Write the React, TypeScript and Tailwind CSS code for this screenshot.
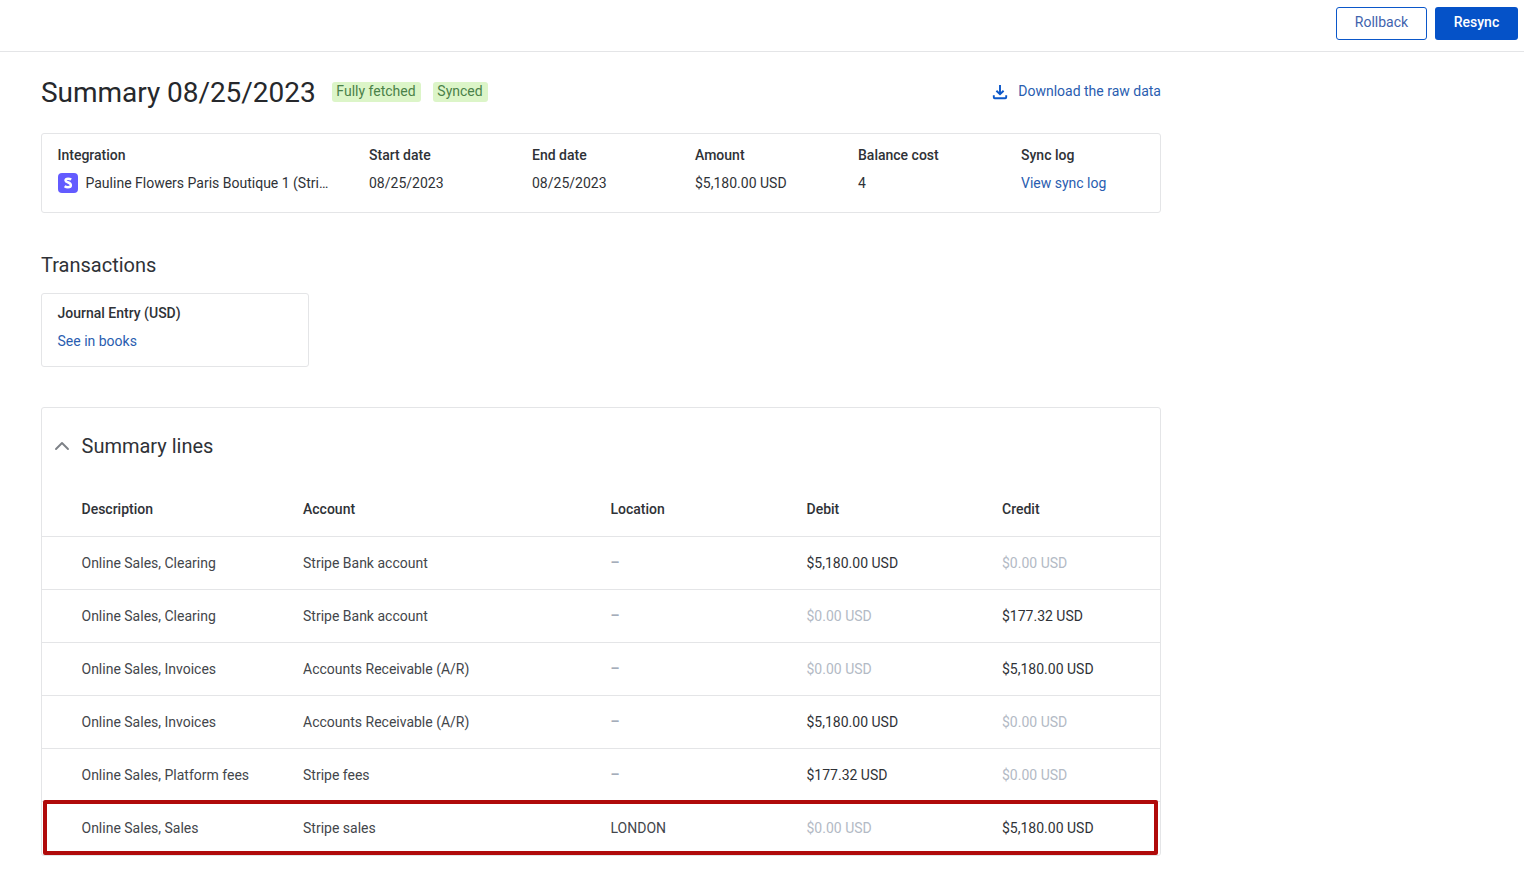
import { ChevronUp } from 'lucide-react';

const lines = [
  { description: 'Online Sales, Clearing', account: 'Stripe Bank account', location: '–', debit: '$5,180.00 USD', credit: '$0.00 USD' },
  { description: 'Online Sales, Clearing', account: 'Stripe Bank account', location: '–', debit: '$0.00 USD', credit: '$177.32 USD' },
  { description: 'Online Sales, Invoices', account: 'Accounts Receivable (A/R)', location: '–', debit: '$0.00 USD', credit: '$5,180.00 USD' },
  { description: 'Online Sales, Invoices', account: 'Accounts Receivable (A/R)', location: '–', debit: '$5,180.00 USD', credit: '$0.00 USD' },
  { description: 'Online Sales, Platform fees', account: 'Stripe fees', location: '–', debit: '$177.32 USD', credit: '$0.00 USD' },
  { description: 'Online Sales, Sales', account: 'Stripe sales', location: 'LONDON', debit: '$0.00 USD', credit: '$5,180.00 USD' },
];

const tableCols = 'grid grid-cols-[221.5px_307.5px_196px_195.5px_1fr] pl-[39.5px] items-center';

function Amount({ value }: { value: string }) {
  const isZero = value.startsWith('$0.00');
  return <div className={isZero ? 'text-[#b3bac5]' : 'text-[#2f3237]'}>{value}</div>;
}

function DownloadIcon() {
  return (
    <svg width="16" height="16" viewBox="0 0 16 16" fill="none" className="text-[#0b57c9]">
      <path d="M8 1v9M4.4 6.7 8 10.2l3.6-3.5" stroke="currentColor" strokeWidth="1.9" />
      <path d="M1.8 11.2v2.1c0 .5.4.9.9.9h10.6c.5 0 .9-.4.9-.9v-2.1" stroke="currentColor" strokeWidth="1.9" />
    </svg>
  );
}

function StripeLogo() {
  return (
    <div className="w-5 h-5 rounded-[4px] bg-[#635bff] flex items-center justify-center shrink-0">
      <svg width="10" height="12" viewBox="0 0 10 12" fill="none">
        <path d="M8.2 2.6C7.3 2 6.2 1.7 5.1 1.7c-1.5 0-2.6.6-2.6 1.7 0 2.3 5.4 1.4 5.4 4.9 0 1.3-1.2 2-3 2-1.2 0-2.4-.4-3.3-1" stroke="white" strokeWidth="2.4" />
      </svg>
    </div>
  );
}

export default function App() {
  return (
    <div className="min-h-[869px] bg-white font-['Roboto',sans-serif] text-[14px] leading-5 text-[#2f3237]">
      <header className="h-[52px] border-b border-[#e4e5e7] flex justify-end items-start gap-2 pt-[7px] pr-[6px]">
        <button className="w-[91px] h-[33px] pb-[4px] rounded-[3px] border border-[#0b57c9] text-[#3f63ad] bg-white">Rollback</button>
        <button className="w-[83px] h-[33px] pb-[4px] rounded-[3px] bg-[#0552c8] text-white font-medium">Resync</button>
      </header>

      <main className="w-[1120px] ml-[41px]">
        <div className="flex items-center justify-between h-[81px] pb-[1px]">
          <div className="flex items-center">
            <h1 className="w-[274.5px] whitespace-nowrap pt-[2px] text-[28px] leading-9 tracking-[-0.04px] text-[#26282c]">Summary 08/25/2023</h1>
            <span className="ml-[16px] w-[89px] h-5 pb-[2px] text-center rounded-[3px] bg-[#dcf5c8] text-[#4a8148] leading-[18px]">Fully fetched</span>
            <span className="ml-3 w-[55px] h-5 pb-[2px] text-center rounded-[3px] bg-[#dcf5c8] text-[#4a8148] leading-[18px]">Synced</span>
          </div>
          <a className="flex items-center gap-[10px] text-[#2a5db0]">
            <DownloadIcon />
            <span className="pb-[2px]">Download the raw data</span>
          </a>
        </div>

        <section className="h-[80px] border border-[#e4e5e7] rounded-[3px] pl-[15.5px] pt-[11px] grid grid-cols-[311.5px_163px_163px_163px_163px_1fr]">
          <div>
            <div className="font-medium h-5">Integration</div>
            <div className="flex items-center gap-2 mt-2 h-5">
              <StripeLogo />
              <span className="whitespace-nowrap">Pauline Flowers Paris Boutique 1 (Stri…</span>
            </div>
          </div>
          <div>
            <div className="font-medium h-5">Start date</div>
            <div className="mt-2">08/25/2023</div>
          </div>
          <div>
            <div className="font-medium h-5">End date</div>
            <div className="mt-2">08/25/2023</div>
          </div>
          <div>
            <div className="font-medium h-5">Amount</div>
            <div className="mt-2">$5,180.00 USD</div>
          </div>
          <div>
            <div className="font-medium h-5">Balance cost</div>
            <div className="mt-2">4</div>
          </div>
          <div>
            <div className="font-medium h-5">Sync log</div>
            <a className="block mt-2 text-[#2a5db0]">View sync log</a>
          </div>
        </section>

        <h2 className="mt-[39px] text-[20px] leading-[26px] text-[#2f3237]">Transactions</h2>

        <section className="mt-[15px] w-[268px] h-[74px] border border-[#e4e5e7] rounded-[3px] pl-[15.5px] pt-[9px]">
          <div className="font-medium">Journal Entry (USD)</div>
          <a className="block mt-2 text-[#2a5db0]">See in books</a>
        </section>

        <section className="relative mt-[40px] border border-[#e4e5e7] rounded-[3px] h-[449px]">
          <div className="flex items-center h-[76px] pl-[8px]">
            <ChevronUp size={24} strokeWidth={1.9} className="text-[#7d8187]" />
            <h2 className="ml-[7.5px] text-[20px] leading-[26px] text-[#2f3237]">Summary lines</h2>
          </div>
          <div className={`${tableCols} h-[53px] pb-[2px] border-b border-[#e4e5e7] font-medium`}>
            <div>Description</div>
            <div>Account</div>
            <div>Location</div>
            <div>Debit</div>
            <div>Credit</div>
          </div>
          {lines.map((line, i) => (
            <div key={i} className={`${tableCols} h-[53px] border-b ${i < lines.length - 1 ? 'border-[#e4e5e7]' : 'border-transparent'}`}>
              <div className="text-[#43464b]">{line.description}</div>
              <div className="text-[#43464b]">{line.account}</div>
              <div className={line.location === '–' ? 'text-[#a5adba] font-bold pb-[2px]' : 'text-[#43464b]'}>{line.location}</div>
              <Amount value={line.debit} />
              <Amount value={line.credit} />
            </div>
          ))}
          {/* annotation box around the last row */}
          <div className="absolute left-[1px] right-[2px] top-[392px] h-[55px] border-[4px] border-[#b00a0a] rounded-[2px] pointer-events-none" />
        </section>
      </main>
    </div>
  );
}
